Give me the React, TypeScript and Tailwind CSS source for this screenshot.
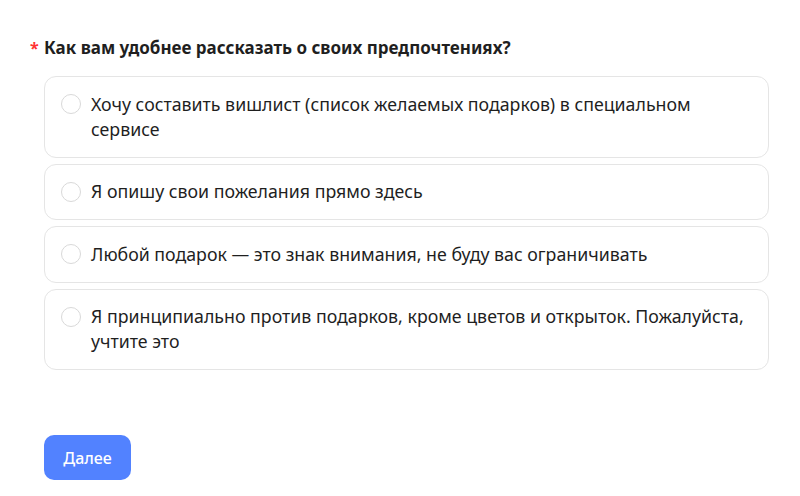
const options = [
  "Хочу составить вишлист (список желаемых подарков) в специальном сервисе",
  "Я опишу свои пожелания прямо здесь",
  "Любой подарок — это знак внимания, не буду вас ограничивать",
  "Я принципиально против подарков, кроме цветов и открыток. Пожалуйста, учтите это",
];

export default function App() {
  return (
    <div
      className="w-[800px] h-[496px] bg-white text-[#1f1f1f] pt-[36px] pl-[30px] pr-[31px]"
      style={{ fontFamily: "'Noto Sans', sans-serif" }}
    >
      <div className="flex items-start">
        <span className="w-[14px] text-[#f33] text-[16px] leading-[24px] font-bold">*</span>
        <h2 className="text-[17px] leading-[24px] font-bold">
          Как вам удобнее рассказать о своих предпочтениях?
        </h2>
      </div>
      <div className="ml-[14px] mt-[16px] flex flex-col gap-[6px]">
        {options.map((o) => (
          <label
            key={o}
            className="flex items-start gap-[10px] rounded-[12px] border border-[#e5e5e5] pl-[16px] pr-[14px] pt-[14.5px] pb-[15px] cursor-pointer"
          >
            <span className="mt-[2.5px] w-[20px] h-[20px] shrink-0 rounded-full border border-[#d9d9d9] bg-white" />
            <span className="text-[17.75px] leading-[25px]">{o}</span>
          </label>
        ))}
      </div>
      <button className="ml-[14px] mt-[65px] w-[87px] h-[45px] rounded-[10px] bg-[#5282ff] text-white text-[16px] font-medium">
        Далее
      </button>
    </div>
  );
}
